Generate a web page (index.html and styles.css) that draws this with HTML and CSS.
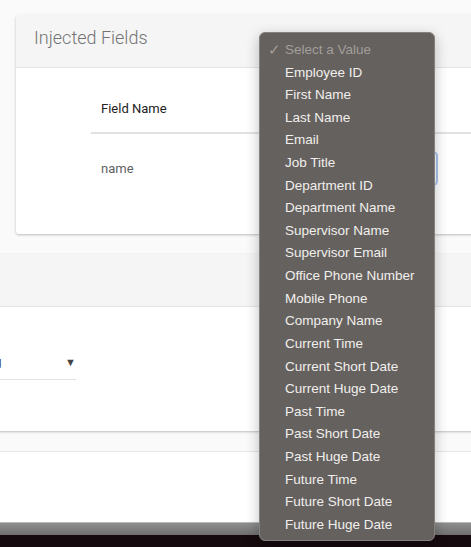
FILE: index.html
```html
<!DOCTYPE html>
<html>
<head>
<meta charset="utf-8">
<link rel="stylesheet" href="styles.css">
</head>
<body>
<div class="page">
  <section class="card card-one">
    <header class="card-head"><h2 class="card-title">Injected Fields</h2></header>
    <div class="card-body">
      <table class="fields">
        <thead><tr><th>Field Name</th><th></th></tr></thead>
        <tbody><tr><td>name</td><td><div class="value-select"></div></td></tr></tbody>
      </table>
    </div>
  </section>
  <section class="card card-two">
    <header class="card-head"></header>
    <div class="card-body">
      <div class="plain-select"><span class="ps-text">String</span><span class="ps-arrow">▼</span></div>
    </div>
  </section>
  <section class="card-three"></section>
  <div class="screen-edge"></div>
  <div class="desk"></div>
</div>
<ul class="dropdown">
  <li class="opt placeholder"><span class="check">✓</span>Select a Value</li>
  <li class="opt">Employee ID</li>
  <li class="opt">First Name</li>
  <li class="opt">Last Name</li>
  <li class="opt">Email</li>
  <li class="opt">Job Title</li>
  <li class="opt">Department ID</li>
  <li class="opt">Department Name</li>
  <li class="opt">Supervisor Name</li>
  <li class="opt">Supervisor Email</li>
  <li class="opt">Office Phone Number</li>
  <li class="opt">Mobile Phone</li>
  <li class="opt">Company Name</li>
  <li class="opt">Current Time</li>
  <li class="opt">Current Short Date</li>
  <li class="opt">Current Huge Date</li>
  <li class="opt">Past Time</li>
  <li class="opt">Past Short Date</li>
  <li class="opt">Past Huge Date</li>
  <li class="opt">Future Time</li>
  <li class="opt">Future Short Date</li>
  <li class="opt">Future Huge Date</li>
</ul>
</body>
</html>
```
FILE: styles.css
```css
* { box-sizing: border-box; }
html, body { margin: 0; padding: 0; }
body {
  background: #fafafa;
  font-family: Roboto, "Liberation Sans", sans-serif;
  width: 471px;
  height: 547px;
  overflow: hidden;
  position: relative;
}
.page {
  display: flex;
  flex-direction: column;
  padding-top: 15px;
}
.card {
  background: #fff;
  border-radius: 3px;
  box-shadow: 0 1px 3px rgba(0,0,0,0.18), 0 1px 2px rgba(0,0,0,0.08);
}
.card-head {
  height: 53px;
  background: #f5f5f5;
  border-bottom: 1px solid #e4e4e4;
  display: flex;
  align-items: center;
  padding-left: 18px;
  padding-bottom: 8px;
}
.card-title {
  margin: 0;
  font-size: 18px;
  font-weight: 300;
  color: #737373;
}
.card-one {
  margin-left: 16px;
  margin-right: -30px;
  height: 219px;
}
.card-one .card-body {
  padding-left: 75px;
}
.fields {
  width: 100%;
  border-collapse: collapse;
  font-size: 13px;
}
.fields th {
  text-align: left;
  font-weight: 400;
  color: #222;
  height: 65px;
  padding: 16px 10px 0 10px;
  border-bottom: 2px solid #e2e2e2;
}
.fields td {
  color: #5f5f5f;
  height: 70px;
  padding: 0 10px;
}
.value-select {
  width: 110px;
  height: 35px;
  margin-left: auto;
  margin-right: 53px;
  border-radius: 5px;
  border: 2px solid #a9c5ef;
}
.card-two {
  margin-top: 20px;
  margin-left: -40px;
  margin-right: -40px;
  height: 177px;
}
.card-two .card-body {
  padding-top: 38px;
}
.plain-select {
  width: 116px;
  height: 35px;
  display: flex;
  align-items: center;
  justify-content: space-between;
  border-bottom: 1px solid #e2e2e2;
  font-size: 13px;
  color: #333;
}
.ps-text {
  margin-left: 10px;
  font-size: 12px;
  color: #444;
}
.ps-arrow {
  font-size: 11px;
  color: #444;
  margin-right: 0;
  margin-top: 0;
}
.card-three {
  margin-top: 20px;
  height: 71px;
  background: #fff;
  border-top: 1px solid #e6e6e6;
}
.screen-edge {
  height: 13px;
  background: linear-gradient(#8e8e8e, #6f6f6f);
  border-top: 1px solid #b8b8b8;
}
.desk {
  height: 20px;
  background: #150a0e;
}
.dropdown {
  position: absolute;
  left: 259px;
  top: 32px;
  width: 176px;
  height: 509px;
  margin: 0;
  padding: 6px 0 4px 0;
  list-style: none;
  background: #65615e;
  border: 1px solid #85817e;
  border-radius: 6px;
  box-shadow: 0 4px 14px rgba(0,0,0,0.25);
  font-family: "Liberation Sans", Arial, sans-serif;
  font-size: 13.5px;
}
.opt {
  height: 22.62px;
  line-height: 22.62px;
  padding-left: 25px;
  color: #f1efed;
  position: relative;
  white-space: nowrap;
}
.opt.placeholder { color: #a29e9b; }
.check {
  position: absolute;
  left: 8px;
  top: 0;
  font-size: 15px;
  color: #a29e9b;
}
```
